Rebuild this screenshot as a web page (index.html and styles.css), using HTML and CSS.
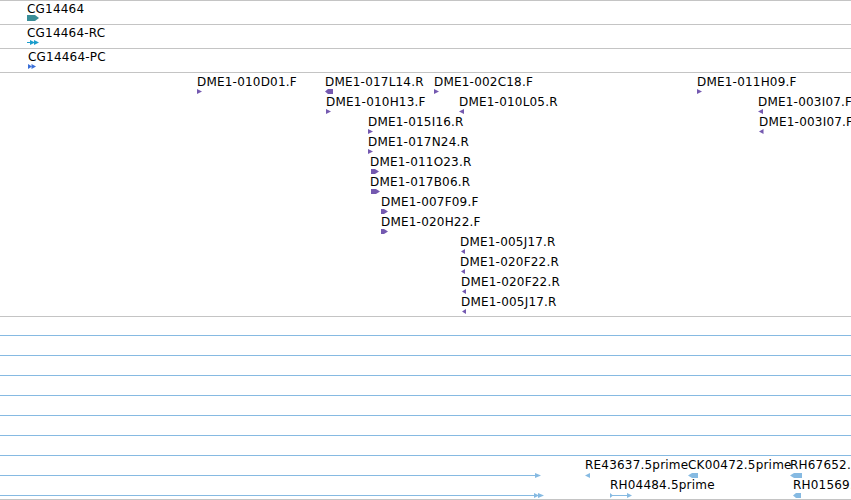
FILE: index.html
```html
<!DOCTYPE html>
<html lang="en">
<head>
    <meta charset="UTF-8">
    <title>Track view</title>
    <link rel="stylesheet" href="styles.css">
</head>
<body>
<div class="view">

    <!-- gene track -->
    <div class="track t-gene">
        <div class="feat" style="left:27px;top:1px">
            <span class="lbl">CG14464</span>
            <svg class="gl teal up" width="13" height="6"><polygon points="0,0 8,0 12,3 8,6 0,6"/></svg>
        </div>
    </div>

    <!-- transcripts -->
    <div class="track t-gene">
        <div class="feat" style="left:27px;top:1px">
            <span class="lbl">CG14464-RC</span>
            <svg class="gl cyan" width="13" height="6"><rect x="0" y="2" width="4" height="1"/><polygon points="3,0 8,2.5 3,5"/><polygon points="7,0 12,2.5 7,5"/></svg>
        </div>
    </div>
    <div class="track t-gene">
        <div class="feat" style="left:28px;top:1px">
            <span class="lbl">CG14464-PC</span>
            <svg class="gl blue" width="9" height="6"><polygon points="0,0 4,2.5 0,5"/><polygon points="3.5,0 8,2.5 3.5,5"/></svg>
        </div>
    </div>

    <!-- EST track -->
    <div class="track t-est">
        <div class="feat" style="left:197px;top:2px"><span class="lbl">DME1-010D01.F</span><svg class="gl purple" width="6" height="6"><polygon points="0,0 5,2.5 0,5"/></svg></div>
        <div class="feat" style="left:325px;top:2px"><span class="lbl">DME1-017L14.R</span><svg class="gl purple" width="9" height="6"><polygon points="0,2.5 3,0 8,0 8,5 3,5"/></svg></div>
        <div class="feat" style="left:434px;top:2px"><span class="lbl">DME1-002C18.F</span><svg class="gl purple" width="6" height="6"><polygon points="0,0 5,2.5 0,5"/></svg></div>
        <div class="feat" style="left:697px;top:2px"><span class="lbl">DME1-011H09.F</span><svg class="gl purple" width="6" height="6"><polygon points="0,0 5,2.5 0,5"/></svg></div>

        <div class="feat" style="left:326px;top:22px"><span class="lbl">DME1-010H13.F</span><svg class="gl purple" width="6" height="6"><polygon points="0,0 5,2.5 0,5"/></svg></div>
        <div class="feat" style="left:459px;top:22px"><span class="lbl">DME1-010L05.R</span><svg class="gl purple" width="6" height="6"><polygon points="5,0 0,2.5 5,5"/></svg></div>
        <div class="feat" style="left:758px;top:22px"><span class="lbl">DME1-003I07.F</span><svg class="gl purple" width="6" height="6"><polygon points="5,0 0,2.5 5,5"/></svg></div>

        <div class="feat" style="left:368px;top:42px"><span class="lbl">DME1-015I16.R</span><svg class="gl purple" width="6" height="6"><polygon points="0,0 5,2.5 0,5"/></svg></div>
        <div class="feat" style="left:759px;top:42px"><span class="lbl">DME1-003I07.F</span><svg class="gl purple" width="6" height="6"><polygon points="4.5,0 0,2.5 4.5,5"/></svg></div>

        <div class="feat" style="left:368px;top:62px"><span class="lbl">DME1-017N24.R</span><svg class="gl purple" width="6" height="6"><polygon points="0,0 5,2.5 0,5"/></svg></div>
        <div class="feat" style="left:370px;top:82px"><span class="lbl">DME1-011O23.R</span><svg class="gl purple" width="10" height="6"><polygon points="1,0 5,0 9,2.5 5,5 1,5"/></svg></div>
        <div class="feat" style="left:370px;top:102px"><span class="lbl">DME1-017B06.R</span><svg class="gl purple" width="10" height="6"><polygon points="1,0 6,0 10,2.5 6,5 1,5"/></svg></div>
        <div class="feat" style="left:381px;top:122px"><span class="lbl">DME1-007F09.F</span><svg class="gl purple" width="8" height="6"><polygon points="0,0 3,0 7,2.5 3,5 0,5"/></svg></div>
        <div class="feat" style="left:381px;top:142px"><span class="lbl">DME1-020H22.F</span><svg class="gl purple" width="8" height="6"><polygon points="0,0 3,0 7,2.5 3,5 0,5"/></svg></div>

        <div class="feat" style="left:460px;top:162px"><span class="lbl">DME1-005J17.R</span><svg class="gl purple" width="6" height="6"><polygon points="5,0 1,2.5 5,5"/></svg></div>
        <div class="feat" style="left:460px;top:182px"><span class="lbl">DME1-020F22.R</span><svg class="gl purple" width="6" height="6"><polygon points="5,0 1,2.5 5,5"/></svg></div>
        <div class="feat" style="left:461px;top:202px"><span class="lbl">DME1-020F22.R</span><svg class="gl purple" width="6" height="6"><polygon points="5,0 1,2.5 5,5"/></svg></div>
        <div class="feat" style="left:461px;top:222px"><span class="lbl">DME1-005J17.R</span><svg class="gl purple" width="6" height="6"><polygon points="5,0 1,2.5 5,5"/></svg></div>
    </div>

    <!-- cDNA track -->
    <div class="track t-cdna">
        <div class="span-line" style="top:18px"></div>
        <div class="span-line" style="top:38px"></div>
        <div class="span-line" style="top:58px"></div>
        <div class="span-line" style="top:78px"></div>
        <div class="span-line" style="top:98px"></div>
        <div class="span-line" style="top:118px"></div>
        <div class="span-line" style="top:138px"></div>

        <svg class="gl sky edge" style="top:155px" width="545" height="7"><rect x="0" y="3" width="536" height="1"/><polygon points="535,1 541,3.5 535,6"/></svg>
        <svg class="gl sky edge" style="top:175px" width="545" height="7"><rect x="0" y="3" width="535" height="1"/><polygon points="534,1 539,3.5 534,6"/><polygon points="538,1 544,3.5 538,6"/></svg>

        <div class="feat" style="left:585px;top:141px"><span class="lbl">RE43637.5prime</span><svg class="gl sky" width="6" height="7"><polygon points="5,1 0,3.5 5,6"/></svg></div>
        <div class="feat" style="left:688px;top:141px"><span class="lbl">CK00472.5prime</span><svg class="gl sky" width="11" height="7"><polygon points="0,3.5 4,1 10,1 10,6 4,6"/></svg></div>
        <div class="feat" style="left:790px;top:141px"><span class="lbl">RH67652.5prime</span><svg class="gl sky" width="13" height="7"><polygon points="0,3.5 4,1 12,1 12,6 4,6"/></svg></div>

        <div class="feat" style="left:610px;top:161px"><span class="lbl">RH04484.5prime</span><svg class="gl sky" width="23" height="7"><rect x="0" y="3" width="20" height="1"/><polygon points="0,1 3,3.5 0,6"/><polygon points="17,1 22,3.5 17,6"/></svg></div>
        <div class="feat" style="left:793px;top:161px"><span class="lbl">RH01569.5prime</span><svg class="gl sky" width="9" height="7"><polygon points="0,3.5 3,1 8,1 8,6 3,6"/></svg></div>
    </div>

</div>
</body>
</html>
```

FILE: styles.css
```css
html, body {
    margin: 0;
    padding: 0;
    overflow: hidden;
    background: #ffffff;
}

body {
    font-family: 'DejaVu Sans', 'Liberation Sans', sans-serif;
    font-size: 12px;
    color: #000000;
}

.view {
    width: 851px;
    border-top: 1px solid #c4c4c4;
}

.track {
    position: relative;
    overflow: hidden;
    border-bottom: 1px solid #c4c4c4;
}

.t-gene {
    height: 23px;
}

.t-est {
    height: 243px;
}

.t-cdna {
    height: 182px;
}

/* a feature: label on top, glyph below */
.feat {
    position: absolute;
    display: flex;
    flex-direction: column;
    align-items: flex-start;
}

.lbl {
    line-height: 14px;
    letter-spacing: 0.2px;
    white-space: nowrap;
}

.gl {
    display: block;
    fill: currentColor;
}

.gl.up {
    margin-top: -1px;
}

.gl.edge {
    position: absolute;
    left: 0;
}

.span-line {
    position: absolute;
    left: 0;
    right: 0;
    height: 1px;
    background: #86bae2;
}

.teal   { color: #3a8e98; }
.cyan   { color: #1a9dcc; }
.blue   { color: #3a6fd8; }
.purple { color: #7459b0; }
.sky    { color: #86bae2; }
```
